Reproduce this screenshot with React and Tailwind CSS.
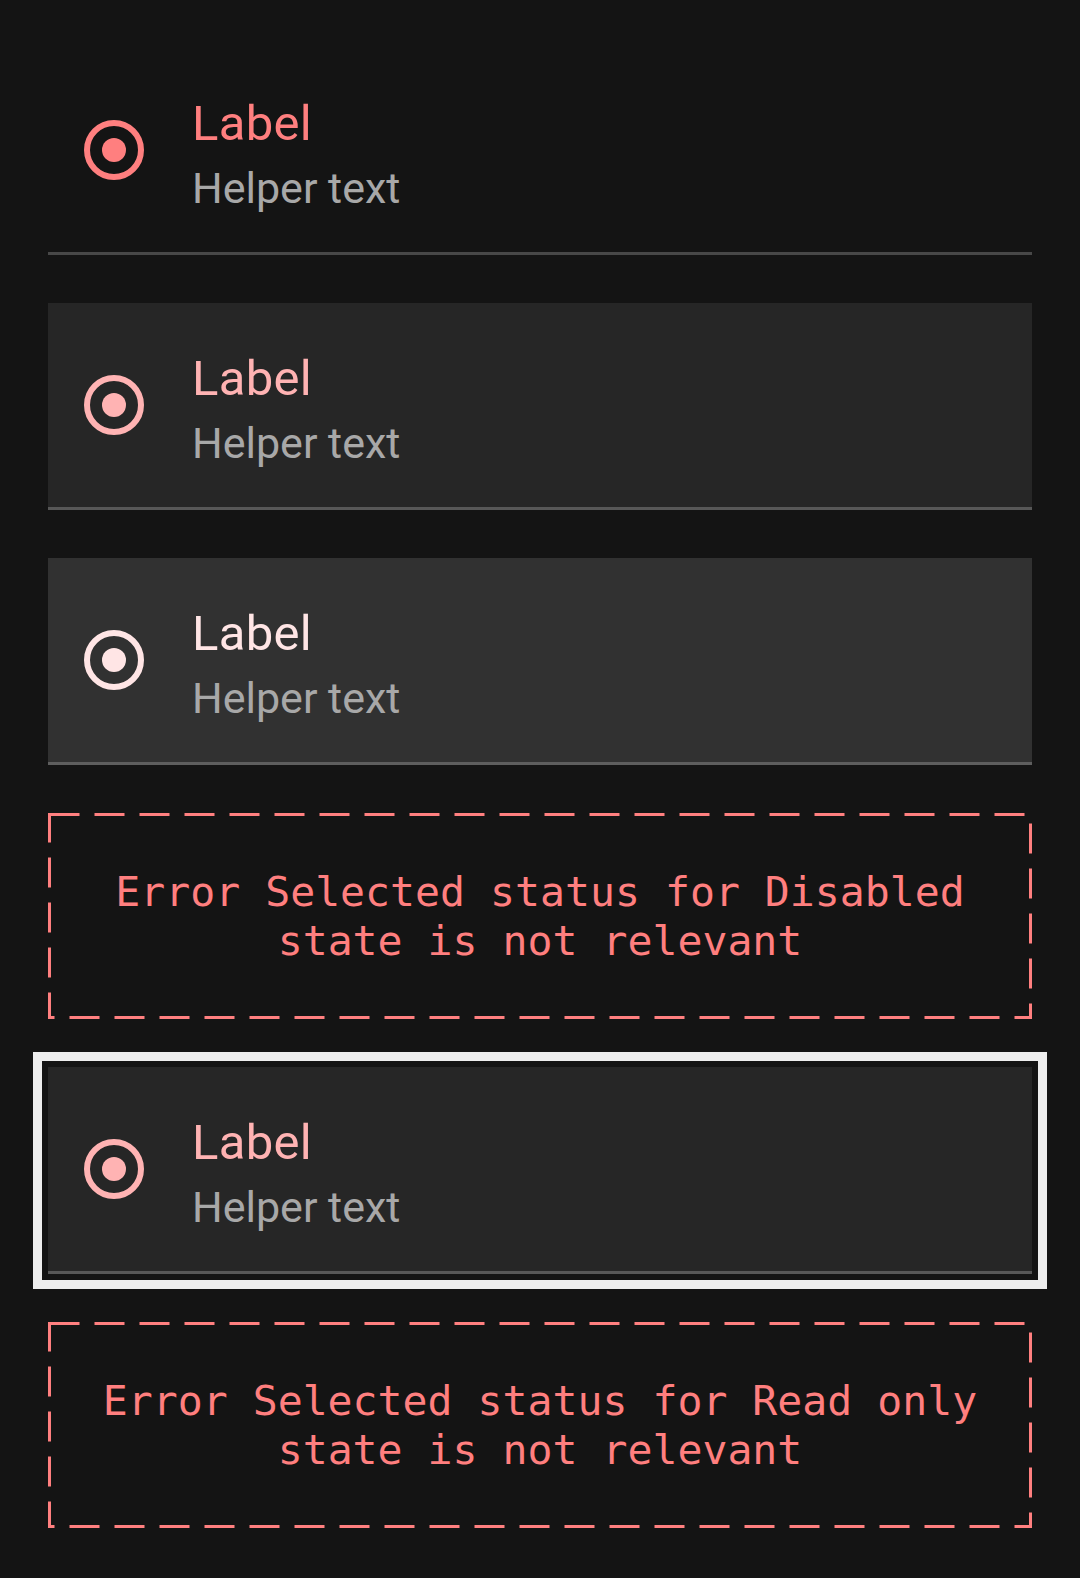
import React from 'react';

const rows = [
    { bg: 'bg-transparent', divider: 'bg-[#484848]', tone: '#ff7f7f', label: 'text-[#ff7f7f]', focus: false },
    { bg: 'bg-[#262626]', divider: 'bg-[#575757]', tone: '#ffb3b3', label: 'text-[#ffb3b3]', focus: false },
    { bg: 'bg-[#313131]', divider: 'bg-[#5e5e5e]', tone: '#ffe5e5', label: 'text-[#ffe5e5]', focus: false },
];

const RadioIcon = ({ color }) => (
    <svg width="60" height="60" viewBox="0 0 20 20" className="shrink-0">
        <circle cx="10" cy="10" r="9" fill="none" stroke={color} strokeWidth="2" />
        <circle cx="10" cy="10" r="4" fill={color} />
    </svg>
);

const RadioRow = ({ row }) => (
    <div className={`flex flex-col w-[984px] ${row.bg} ${row.focus ? 'outline-[9px] outline-solid outline-[#eeeeee] outline-offset-[6px]' : ''}`}>
        <div className="flex items-center h-[204px] pl-[36px]">
            <RadioIcon color={row.tone} />
            <div className="flex flex-col ml-[48px] mt-[8px] font-['Roboto',sans-serif]">
                <span className={`text-[49px] leading-[72px] tracking-[0.3px] ${row.label}`}>Label</span>
                <span className="text-[43px] leading-[56px] mb-[4px] text-[#a8a8a8]">Helper text</span>
            </div>
        </div>
        <div className={`h-[3px] ${row.divider}`}></div>
    </div>
);

const ErrorBox = ({ children }) => (
    <div className="relative flex items-center justify-center w-[984px] h-[206px] px-[12px]">
        <svg width="984" height="206" className="absolute left-0 top-0">
            <rect x="1.5" y="1.5" width="981" height="203" fill="none" stroke="#ff7f7f" strokeWidth="3" strokeDasharray="30 15" />
        </svg>
        <p className="text-center text-[41.5px] leading-[49px] text-[#ff7f7f] font-['DejaVu_Sans_Mono',monospace]">
            {children}
        </p>
    </div>
);

const App = () => {
    return (
        <div className="min-h-[1578px] bg-[#141414] flex flex-col items-center gap-[48px] py-[48px]">
            {rows.map((row, index) => (
                <RadioRow key={index} row={row} />
            ))}
            <ErrorBox>Error Selected status for Disabled state is not relevant</ErrorBox>
            <RadioRow row={{ bg: 'bg-[#262626]', divider: 'bg-[#575757]', tone: '#ffb3b3', label: 'text-[#ffb3b3]', focus: true }} />
            <ErrorBox>Error Selected status for Read only state is not relevant</ErrorBox>
        </div>
    );
};

export default App;
